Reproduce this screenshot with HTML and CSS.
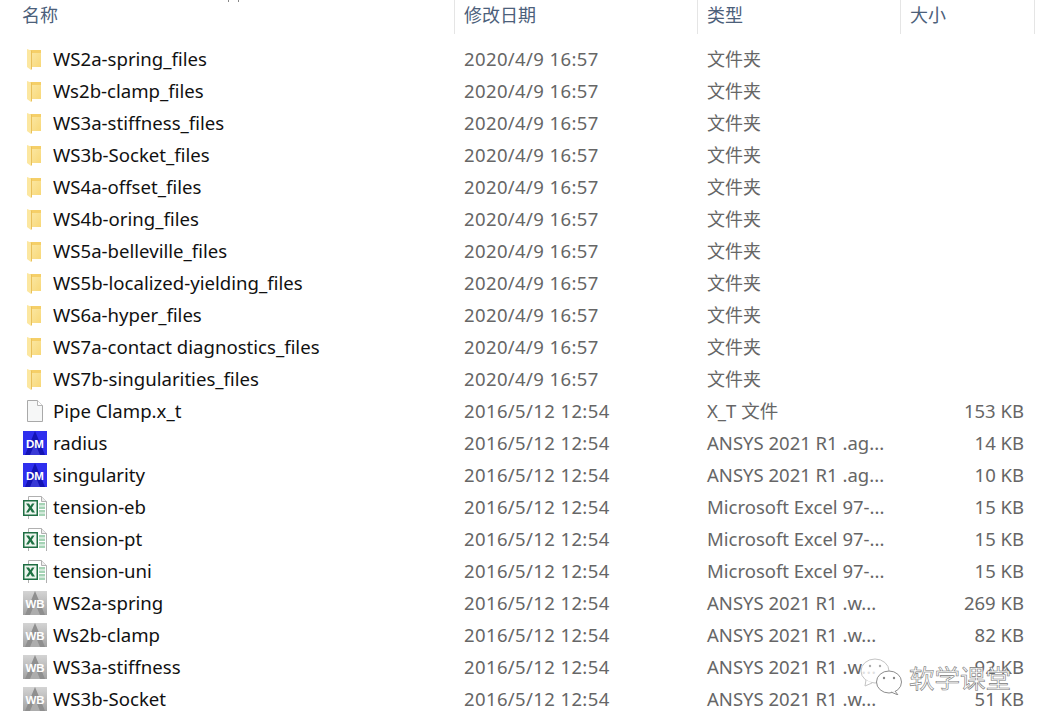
FILE: index.html
```html
<!DOCTYPE html>
<html lang="zh-CN">
<head>
    <meta charset="UTF-8">
    <title>文件列表</title>
    <link rel="stylesheet" href="styles.css">
</head>
<body>
    <svg class="defs" width="0" height="0">
        <defs>
            <linearGradient id="folder-front" x1="0" y1="0" x2="1" y2="1">
                <stop offset="0" stop-color="#fbe9a8"/>
                <stop offset="1" stop-color="#f8d878"/>
            </linearGradient>
            <linearGradient id="wb-bg" x1="0" y1="0" x2="0" y2="1">
                <stop offset="0" stop-color="#d4d4d4"/>
                <stop offset="1" stop-color="#a2a2a2"/>
            </linearGradient>
            <symbol id="i-folder" viewBox="0 0 24 24">
                <path d="M7 3h11v17H7z" fill="url(#folder-front)"/>
                <path d="M7 3h11v3H7z" fill="#f5cf68"/>
                <path d="M4 2l4 1.500V23l-4-3z" fill="#fce7a0"/>
                <path d="M8 3.500V23l1-1V4z" fill="#e9c05a"/>
            </symbol>
            <symbol id="i-file" viewBox="0 0 24 24">
                <path d="M4.500 1.500h10l5 5v16h-15z" fill="#f6f7f7" stroke="#a9a9a9"/>
                <path d="M14.500 1.500v5h5" fill="#fff" stroke="#b5b5b5"/>
            </symbol>
            <symbol id="i-dm" viewBox="0 0 24 24">
                <rect width="24" height="24" fill="#2f2fee"/>
                <path d="M12 0l10 24H2z" fill="#1414b4"/>
                <path d="M12 12l5 12H7z" fill="#3a3ad6"/>
                <text x="12" y="16.500" class="badge-text">DM</text>
            </symbol>
            <symbol id="i-wb" viewBox="0 0 24 24">
                <rect width="24" height="24" fill="url(#wb-bg)"/>
                <path d="M12 0l10 24H2z" fill="#8f8f8f"/>
                <path d="M12 12l5 12H7z" fill="#adadad"/>
                <text x="12" y="16.500" class="badge-text">WB</text>
            </symbol>
            <symbol id="i-xls" viewBox="0 0 24 24">
                <path d="M5.500 1.500h13l5 5v18h-18z" fill="#fff" stroke="#b0b0b0"/>
                <path d="M18.500 1.500v5h5" fill="#eee" stroke="#b0b0b0"/>
                <path d="M16 8h6v2.500h-6zM16 11.500h6V14h-6zM16 15h6v2.500h-6zM16 18.500h6V21h-6z" fill="#a5d3b5"/>
                <rect x=".75" y="5.750" width="13.500" height="14.500" fill="#eef6ef" stroke="#1f6e43" stroke-width="1.500"/>
                <path d="M3 8.500h3l1.500 2.500L9 8.500h2.500l-2.700 4.200L12 17.500H9l-1.700-2.700L5.500 17.500H3l3-4.700z" fill="#1f7244"/>
            </symbol>
        </defs>
    </svg>

    <div class="top-mark"></div>

    <div class="explorer">
        <div class="header">
            <div class="col-head first">名称</div>
            <div class="col-head">修改日期</div>
            <div class="col-head">类型</div>
            <div class="col-head">大小</div>
        </div>

        <div class="rows">
            <div class="row"><div class="name"><svg class="icon"><use href="#i-folder"/></svg>WS2a-spring_files</div><div class="cell date">2020/4/9 16:57</div><div class="cell dir">文件夹</div><div class="size"></div></div>
            <div class="row"><div class="name"><svg class="icon"><use href="#i-folder"/></svg>Ws2b-clamp_files</div><div class="cell date">2020/4/9 16:57</div><div class="cell dir">文件夹</div><div class="size"></div></div>
            <div class="row"><div class="name"><svg class="icon"><use href="#i-folder"/></svg>WS3a-stiffness_files</div><div class="cell date">2020/4/9 16:57</div><div class="cell dir">文件夹</div><div class="size"></div></div>
            <div class="row"><div class="name"><svg class="icon"><use href="#i-folder"/></svg>WS3b-Socket_files</div><div class="cell date">2020/4/9 16:57</div><div class="cell dir">文件夹</div><div class="size"></div></div>
            <div class="row"><div class="name"><svg class="icon"><use href="#i-folder"/></svg>WS4a-offset_files</div><div class="cell date">2020/4/9 16:57</div><div class="cell dir">文件夹</div><div class="size"></div></div>
            <div class="row"><div class="name"><svg class="icon"><use href="#i-folder"/></svg>WS4b-oring_files</div><div class="cell date">2020/4/9 16:57</div><div class="cell dir">文件夹</div><div class="size"></div></div>
            <div class="row"><div class="name"><svg class="icon"><use href="#i-folder"/></svg>WS5a-belleville_files</div><div class="cell date">2020/4/9 16:57</div><div class="cell dir">文件夹</div><div class="size"></div></div>
            <div class="row"><div class="name"><svg class="icon"><use href="#i-folder"/></svg>WS5b-localized-yielding_files</div><div class="cell date">2020/4/9 16:57</div><div class="cell dir">文件夹</div><div class="size"></div></div>
            <div class="row"><div class="name"><svg class="icon"><use href="#i-folder"/></svg>WS6a-hyper_files</div><div class="cell date">2020/4/9 16:57</div><div class="cell dir">文件夹</div><div class="size"></div></div>
            <div class="row"><div class="name"><svg class="icon"><use href="#i-folder"/></svg>WS7a-contact diagnostics_files</div><div class="cell date">2020/4/9 16:57</div><div class="cell dir">文件夹</div><div class="size"></div></div>
            <div class="row"><div class="name"><svg class="icon"><use href="#i-folder"/></svg>WS7b-singularities_files</div><div class="cell date">2020/4/9 16:57</div><div class="cell dir">文件夹</div><div class="size"></div></div>
            <div class="row"><div class="name"><svg class="icon"><use href="#i-file"/></svg>Pipe Clamp.x_t</div><div class="cell date">2016/5/12 12:54</div><div class="cell">X_T 文件</div><div class="size">153 KB</div></div>
            <div class="row"><div class="name"><svg class="icon"><use href="#i-dm"/></svg>radius</div><div class="cell date">2016/5/12 12:54</div><div class="cell">ANSYS 2021 R1 .ag...</div><div class="size">14 KB</div></div>
            <div class="row"><div class="name"><svg class="icon"><use href="#i-dm"/></svg>singularity</div><div class="cell date">2016/5/12 12:54</div><div class="cell">ANSYS 2021 R1 .ag...</div><div class="size">10 KB</div></div>
            <div class="row"><div class="name"><svg class="icon"><use href="#i-xls"/></svg>tension-eb</div><div class="cell date">2016/5/12 12:54</div><div class="cell">Microsoft Excel 97-...</div><div class="size">15 KB</div></div>
            <div class="row"><div class="name"><svg class="icon"><use href="#i-xls"/></svg>tension-pt</div><div class="cell date">2016/5/12 12:54</div><div class="cell">Microsoft Excel 97-...</div><div class="size">15 KB</div></div>
            <div class="row"><div class="name"><svg class="icon"><use href="#i-xls"/></svg>tension-uni</div><div class="cell date">2016/5/12 12:54</div><div class="cell">Microsoft Excel 97-...</div><div class="size">15 KB</div></div>
            <div class="row"><div class="name"><svg class="icon"><use href="#i-wb"/></svg>WS2a-spring</div><div class="cell date">2016/5/12 12:54</div><div class="cell">ANSYS 2021 R1 .w...</div><div class="size">269 KB</div></div>
            <div class="row"><div class="name"><svg class="icon"><use href="#i-wb"/></svg>Ws2b-clamp</div><div class="cell date">2016/5/12 12:54</div><div class="cell">ANSYS 2021 R1 .w...</div><div class="size">82 KB</div></div>
            <div class="row"><div class="name"><svg class="icon"><use href="#i-wb"/></svg>WS3a-stiffness</div><div class="cell date">2016/5/12 12:54</div><div class="cell">ANSYS 2021 R1 .w...</div><div class="size">92 KB</div></div>
            <div class="row"><div class="name"><svg class="icon"><use href="#i-wb"/></svg>WS3b-Socket</div><div class="cell date">2016/5/12 12:54</div><div class="cell">ANSYS 2021 R1 .w...</div><div class="size">51 KB</div></div>
        </div>
    </div>

    <!-- 水印 -->
    <div class="watermark">
        <svg class="wechat" viewBox="0 0 42 37">
            <ellipse cx="15" cy="13" rx="14" ry="12" fill="#fff" fill-opacity=".8" stroke="#c4c4c4"/>
            <path d="M6 22l-1 6 7-3" fill="#fff" stroke="#c4c4c4"/>
            <ellipse cx="29" cy="24" rx="12.500" ry="11" fill="#fff" stroke="#8c8c8c"/>
            <path d="M35 33l3 4-7-3" fill="#fff" stroke="#8c8c8c"/>
            <circle cx="10" cy="8" r="1.200" fill="#aaa"/>
            <circle cx="20" cy="8" r="1.200" fill="#aaa"/>
            <circle cx="24" cy="20" r="1.200" fill="#888"/>
            <circle cx="34" cy="20" r="1.200" fill="#888"/>
        </svg>
        <span class="wm-text">软学课堂</span>
    </div>
</body>
</html>
```

FILE: styles.css
```css
html, body {
    margin: 0;
    height: 724px;
    overflow: hidden;
    background: #fff;
}
body {
    position: relative;
    font-family: "Noto Sans", "Noto Sans CJK SC", sans-serif;
    font-size: 18.500px;
}
.defs {
    position: absolute;
}
.badge-text {
    font-family: "Liberation Sans", sans-serif;
    font-size: 11.500px;
    font-weight: bold;
    fill: #fff;
    text-anchor: middle;
}
.top-mark {
    position: absolute;
    left: 228px;
    top: 0;
    width: 9px;
    height: 2px;
    border-left: 1px solid #888;
    border-right: 1px solid #888;
}
.header {
    display: grid;
    grid-template-columns: 454px 243px 203px 135px;
    height: 34px;
}
.col-head {
    padding-left: 9px;
    font-size: 18px;
    line-height: 30px;
    color: #4c607a;
    border-left: 1px solid #e5e5e5;
    box-sizing: border-box;
}
.col-head.first {
    padding-left: 22px;
    border-left: none;
}
.col-head:last-child {
    border-right: 1px solid #e5e5e5;
}
.rows {
    padding-top: 9px;
}
.row {
    display: grid;
    grid-template-columns: 455px 243px 203px 123px;
    height: 32px;
    line-height: 32px;
    white-space: nowrap;
}
.name {
    display: flex;
    align-items: center;
    gap: 6px;
    padding-left: 23px;
    font-size: 18.600px;
    color: #111;
}
.icon {
    width: 24px;
    height: 24px;
    flex: none;
}
.cell {
    padding-left: 9px;
    color: #666;
}
.date {
    letter-spacing: .38px;
}
.dir {
    font-size: 18px;
}
.size {
    text-align: right;
    color: #666;
}
.watermark {
    position: absolute;
    left: 860px;
    top: 658px;
    display: flex;
    align-items: center;
    gap: 7px;
}
.wechat {
    width: 42px;
    height: 37px;
}
.wm-text {
    font-size: 25.500px;
    color: #fff;
    -webkit-text-stroke: .6px #777;
}
```
